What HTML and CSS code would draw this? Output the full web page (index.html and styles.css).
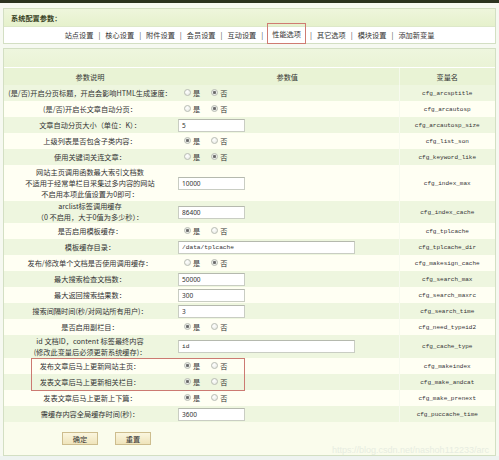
FILE: index.html
```html
<!DOCTYPE html>
<html lang="zh-CN">
<head>
<meta charset="utf-8">
<title>系统配置参数</title>
<link rel="stylesheet" href="styles.css">
</head>
<body>
<div class="topbar"></div>
<div class="page">
  <div class="box nav-box">
    <div class="box-title">系统配置参数：</div>
    <div class="tabs">
      <a class="tab">站点设置</a><span class="sep">|</span>
      <a class="tab">核心设置</a><span class="sep">|</span>
      <a class="tab">附件设置</a><span class="sep">|</span>
      <a class="tab">会员设置</a><span class="sep">|</span>
      <a class="tab">互动设置</a><span class="sep">|</span>
      <a class="tab tab-marked">性能选项</a><span class="sep">|</span>
      <a class="tab">其它选项</a><span class="sep">|</span>
      <a class="tab">模块设置</a><span class="sep">|</span>
      <a class="tab">添加新变量</a>
    </div>
  </div>

  <div class="box main-box">
    <div class="band"></div>
    <div class="table-wrap">
      <table class="cfg">
        <colgroup><col class="c1"><col class="c2"><col class="c3"></colgroup>
        <thead>
          <tr><th>参数说明</th><th>参数值</th><th class="th3">变量名</th></tr>
        </thead>
        <tbody>
          <tr class="g"><td class="desc">(是/否)开启分页标题，开启会影响HTML生成速度：</td><td class="val"><label class="opt"><input type="radio" name="r1">是</label><label class="opt"><input type="radio" name="r1" checked>否</label></td><td class="var">cfg_arcsptitle</td></tr>
          <tr class="c"><td class="desc">(是/否)开启长文章自动分页：</td><td class="val"><label class="opt"><input type="radio" name="r2">是</label><label class="opt"><input type="radio" name="r2" checked>否</label></td><td class="var">cfg_arcautosp</td></tr>
          <tr class="g"><td class="desc">文章自动分页大小（单位：K）：</td><td class="val"><input class="txt" type="text" value="5"></td><td class="var">cfg_arcautosp_size</td></tr>
          <tr class="c"><td class="desc">上级列表是否包含子类内容：</td><td class="val"><label class="opt"><input type="radio" name="r4" checked>是</label><label class="opt"><input type="radio" name="r4">否</label></td><td class="var">cfg_list_son</td></tr>
          <tr class="g"><td class="desc">使用关键词关连文章：</td><td class="val"><label class="opt"><input type="radio" name="r5">是</label><label class="opt"><input type="radio" name="r5" checked>否</label></td><td class="var">cfg_keyword_like</td></tr>
          <tr class="c tall3"><td class="desc">网站主页调用函数最大索引文档数<br>不适用于经常单栏目采集过多内容的网站<br>不启用本项此值设置为0即可：</td><td class="val"><input class="txt" type="text" value="10000"></td><td class="var">cfg_index_max</td></tr>
          <tr class="g tall2"><td class="desc">arclist标签调用缓存<br>（0 不启用，大于0值为多少秒）：</td><td class="val"><input class="txt" type="text" value="86400"></td><td class="var">cfg_index_cache</td></tr>
          <tr class="c"><td class="desc">是否启用模板缓存：</td><td class="val"><label class="opt"><input type="radio" name="r8" checked>是</label><label class="opt"><input type="radio" name="r8">否</label></td><td class="var">cfg_tplcache</td></tr>
          <tr class="g"><td class="desc">模板缓存目录：</td><td class="val"><input class="txt txt-long" type="text" value="/data/tplcache"></td><td class="var">cfg_tplcache_dir</td></tr>
          <tr class="c"><td class="desc">发布/修改单个文档是否使用调用缓存：</td><td class="val"><label class="opt"><input type="radio" name="r10">是</label><label class="opt"><input type="radio" name="r10" checked>否</label></td><td class="var">cfg_makesign_cache</td></tr>
          <tr class="g"><td class="desc">最大搜索检查文档数：</td><td class="val"><input class="txt" type="text" value="50000"></td><td class="var">cfg_search_max</td></tr>
          <tr class="c"><td class="desc">最大返回搜索结果数：</td><td class="val"><input class="txt" type="text" value="300"></td><td class="var">cfg_search_maxrc</td></tr>
          <tr class="g"><td class="desc">搜索间隔时间(秒/对网站所有用户)：</td><td class="val"><input class="txt" type="text" value="3"></td><td class="var">cfg_search_time</td></tr>
          <tr class="c"><td class="desc">是否启用副栏目：</td><td class="val"><label class="opt"><input type="radio" name="r14" checked>是</label><label class="opt"><input type="radio" name="r14">否</label></td><td class="var">cfg_need_typeid2</td></tr>
          <tr class="g tall2b"><td class="desc">id 文档ID，content 标签最终内容<br>(修改此变量后必须更新系统缓存)：</td><td class="val"><input class="txt txt-long" type="text" value="id"></td><td class="var">cfg_cache_type</td></tr>
          <tr class="c"><td class="desc">发布文章后马上更新网站主页：</td><td class="val"><label class="opt"><input type="radio" name="r16" checked>是</label><label class="opt"><input type="radio" name="r16">否</label></td><td class="var">cfg_makeindex</td></tr>
          <tr class="g"><td class="desc">发表文章后马上更新相关栏目：</td><td class="val"><label class="opt"><input type="radio" name="r17" checked>是</label><label class="opt"><input type="radio" name="r17">否</label></td><td class="var">cfg_make_andcat</td></tr>
          <tr class="c"><td class="desc">发表文章后马上更新上下篇：</td><td class="val"><label class="opt"><input type="radio" name="r18" checked>是</label><label class="opt"><input type="radio" name="r18">否</label></td><td class="var">cfg_make_prenext</td></tr>
          <tr class="g"><td class="desc">需缓存内容全局缓存时间(秒)：</td><td class="val"><input class="txt" type="text" value="3600"></td><td class="var">cfg_puccache_time</td></tr>
        </tbody>
      </table>
      <div class="mark"></div>
    </div>
    <div class="actions">
      <button class="btn" type="button">确定</button>
      <button class="btn" type="button">重置</button>
      <span class="wm">https://blog.csdn.net/nashoh112233/arc</span>
    </div>
  </div>
</div>
<div class="bottom"></div>
</body>
</html>
```

FILE: styles.css
```css
* { box-sizing: border-box; }

html, body {
  margin: 0;
  padding: 0;
}

body {
  width: 499px;
  height: 460px;
  overflow: hidden;
  background: #eef4ee;
  font-family: "Noto Sans CJK SC", "Noto Sans", sans-serif;
  font-size: 7.2px;
  color: #333;
}

.topbar {
  height: 3px;
  background: #2b331f;
}

.page {
  padding: 5px 3px 0 3px;
  background: #f6f9f1;
}

.box {
  border: 1px solid #d3dfc3;
  background: #fff;
}

.box-title {
  height: 18px;
  line-height: 18px;
  padding-left: 7px;
  font-weight: bold;
  color: #38421f;
  background: linear-gradient(#eef6dc, #e6f1cc);
  border-bottom: 1px solid #dde8c9;
}

.tabs {
  height: 16px;
  display: flex;
  justify-content: center;
  align-items: center;
  background: #fff;
  color: #333;
}

.tab {
  padding: 0 1px;
}

.tab-marked {
  border: 1px solid #cf7b72;
  padding: 5px 4px 4px 4px;
  margin-top: -3px;
}

.sep {
  margin: 0 4px;
  color: #444;
}

.main-box {
  margin-top: 4px;
  background: #fdfdf3;
}

.band {
  height: 19px;
  background: linear-gradient(#eef6de, #eaf3d6);
  border-bottom: 1px solid #fff;
}

.table-wrap {
  position: relative;
}

.cfg {
  width: 100%;
  border-collapse: collapse;
  table-layout: fixed;
}

.c1 { width: 172px; }
.c3 { width: 96px; }

.cfg th {
  height: 17px;
  font-weight: normal;
  background: #e9f3d5;
  color: #333;
  padding: 0;
  text-align: center;
}

.cfg th.th3 {
  border-left: 1px solid #f4f9ea;
}

.cfg td {
  height: 16px;
  padding: 0;
  vertical-align: middle;
}

.cfg tr.g td { background: #eef6df; }
.cfg tr.c td { background: #fffff3; }

.cfg tr.tall3 td { height: 36px; }
.cfg tr.tall2 td { height: 22px; }
.cfg tr.tall2b td { height: 23px; }

.desc {
  text-align: center;
  line-height: 11px;
}

.val {
  padding-left: 2px !important;
  white-space: nowrap;
}

.var {
  text-align: center;
  font-family: "Liberation Mono", monospace;
  font-size: 6px;
  color: #333;
  border-left: 1px solid #f7faef;
}

.opt {
  display: inline-flex;
  align-items: center;
  margin-right: 5px;
}

.opt input {
  appearance: none;
  -webkit-appearance: none;
  width: 7px;
  height: 7px;
  margin: 0 2px 0 6px;
  border: 1px solid #b9bdb4;
  border-radius: 50%;
  background: radial-gradient(circle at 40% 35%, #ffffff, #e3e6df);
}

.opt input:checked {
  background: radial-gradient(circle, #666 0, #777 1.3px, #eceeea 1.9px, #e2e5df 100%);
}

.txt {
  display: block;
  width: 67px;
  height: 13px;
  border: 1px solid #c9cdc3;
  border-top-color: #b5b9ae;
  background: #fff;
  font-family: "Noto Sans", sans-serif;
  font-size: 6.5px;
  color: #333;
  padding: 0 0 0 3px;
  margin: 0;
  outline: none;
}

.txt-long {
  width: 177px;
  font-family: "Liberation Mono", monospace;
  font-size: 6.2px;
}

.mark {
  position: absolute;
  left: 27px;
  top: 290px;
  width: 214px;
  height: 33px;
  border: 1px solid #cc7a72;
  pointer-events: none;
}

.actions {
  height: 33px;
  display: flex;
  align-items: center;
  gap: 17px;
  padding-left: 58px;
  background: #fafcec;
  position: relative;
}

.btn {
  width: 36px;
  height: 13px;
  padding: 0;
  border: 1px solid #cdbd8e;
  background: linear-gradient(#fbf6df, #efe4bb);
  font-family: "Noto Sans CJK SC", sans-serif;
  font-size: 7.2px;
  color: #333;
}

.wm {
  margin-left: auto;
  align-self: flex-end;
  margin-right: 6px;
  margin-bottom: 0;
  font-family: "Liberation Sans", sans-serif;
  font-size: 9px;
  color: #e7ece1;
}

.bottom {
  height: 20px;
  background: #eef3f0;
}
```
